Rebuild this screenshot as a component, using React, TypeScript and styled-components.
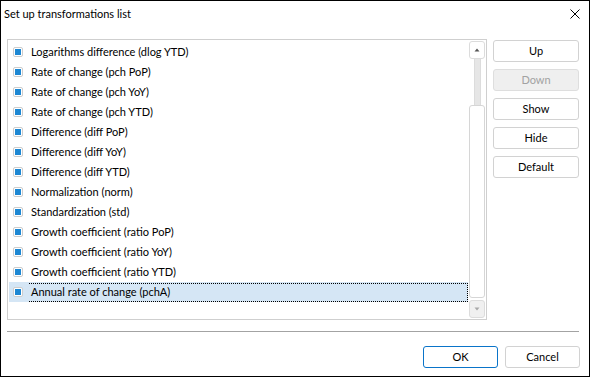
import React from "react";
import styled, { createGlobalStyle } from "styled-components";

const FONT = `Lato, "Noto Sans", sans-serif`;

const Global = createGlobalStyle`
  html, body { margin: 0; padding: 0; background: #fff; }
  * { box-sizing: border-box; }
  body { font-family: ${FONT}; font-size: 11px; color: #000; }
`;

const Window = styled.div`
  width: 590px;
  height: 377px;
  border: 1px solid #000;
  background: #fff;
  display: flex;
  flex-direction: column;
`;

const TitleBar = styled.div`
  height: 38px;
  display: flex;
  align-items: flex-start;
  justify-content: space-between;
  padding: 4px 9px 0 3px;
`;

const Title = styled.div`
  line-height: 18px;
  font-size: 11px;
`;

const CloseBtn = styled.div`
  width: 10px;
  height: 10px;
  margin-top: 4px;
  display: flex;
`;

const MainRow = styled.div`
  display: flex;
  gap: 6px;
  padding-left: 6px;
`;

const ListBox = styled.div`
  width: 480px;
  height: 281px;
  border: 1px solid #cfcfcf;
  display: flex;
  padding: 1px;
`;

const Rows = styled.div`
  flex: 1;
  padding: 1px 1px 0 0;
  display: flex;
  flex-direction: column;
`;

const Row = styled.div<{ $selected?: boolean }>`
  height: 20px;
  display: flex;
  align-items: center;
  padding-left: 4px;
  background: ${(p) => (p.$selected ? "#d5e6f5" : "transparent")};
`;

const Check = styled.span`
  width: 10px;
  height: 10px;
  border: 1px solid #cdcdcd;
  border-radius: 2px;
  padding: 1px;
  display: flex;
  flex-shrink: 0;
  background: #fff;
  &::after {
    content: "";
    flex: 1;
    background: #1c87d3;
  }
`;

const Label = styled.span<{ $focused?: boolean }>`
  flex: 1;
  height: 19px;
  line-height: 16px;
  margin-left: 6px;
  padding-left: 2px;
  white-space: nowrap;
  font-size: 11px;
  border-top: 1px dotted ${(p) => (p.$focused ? "#000" : "transparent")};
  border-bottom: 1px dotted ${(p) => (p.$focused ? "#000" : "transparent")};
  border-right: 1px dotted ${(p) => (p.$focused ? "#000" : "transparent")};
`;

const ScrollBar = styled.div`
  width: 16px;
  display: flex;
  flex-direction: column;
  align-items: center;
`;

const ArrowBtn = styled.div<{ $disabled?: boolean }>`
  width: 16px;
  height: 18px;
  border: 1px solid #dcdcdc;
  border-radius: 3px;
  background: ${(p) => (p.$disabled ? "#f0f0f0" : "#fff")};
  display: flex;
  align-items: center;
  justify-content: center;
  flex-shrink: 0;
`;

const Track = styled.div<{ $h: number }>`
  width: 7px;
  height: ${(p) => p.$h}px;
  background: #e6e6e6;
  border-left: 1px solid #dcdcdc;
  border-right: 1px solid #dcdcdc;
  flex-shrink: 0;
`;

const Thumb = styled.div`
  width: 16px;
  flex: 1;
  border: 1px solid #d6d6d6;
  border-radius: 3px;
  background: #fff;
  margin-bottom: 2px;
`;

const SideButtons = styled.div`
  display: flex;
  flex-direction: column;
  gap: 7px;
  padding-top: 1px;
`;

const Button = styled.button<{ $w?: number; $primary?: boolean }>`
  width: ${(p) => p.$w ?? 86}px;
  height: 22px;
  border: 1px solid ${(p) => (p.$primary ? "#0a74c9" : "#d2d2d2")};
  border-radius: 3px;
  background: #fff;
  font-family: ${FONT};
  font-size: 11px;
  color: #000;
  padding: 0;
  line-height: 18px;
  &:disabled {
    background: #efefef;
    border-color: #dedede;
    color: #a2a2a2;
  }
`;

const Separator = styled.div`
  margin: 11px 0 0 6px;
  width: 572px;
  height: 1px;
  background: #a3a3a3;
`;

const Footer = styled.div`
  display: flex;
  justify-content: flex-end;
  gap: 7px;
  padding: 14px 9px 0 0;
`;

const items = [
  "Logarithms difference (dlog YTD)",
  "Rate of change (pch PoP)",
  "Rate of change (pch YoY)",
  "Rate of change (pch YTD)",
  "Difference (diff PoP)",
  "Difference (diff YoY)",
  "Difference (diff YTD)",
  "Normalization (norm)",
  "Standardization (std)",
  "Growth coefficient (ratio PoP)",
  "Growth coefficient (ratio YoY)",
  "Growth coefficient (ratio YTD)",
  "Annual rate of change (pchA)",
];

export default function App() {
  return (
    <>
      <Global />
      <Window>
        <TitleBar>
          <Title>Set up transformations list</Title>
          <CloseBtn>
            <svg width="10" height="10" viewBox="0 0 10 10">
              <path d="M0.5 0.5 L9.5 9.5 M9.5 0.5 L0.5 9.5" stroke="#000" strokeWidth="1" />
            </svg>
          </CloseBtn>
        </TitleBar>
        <MainRow>
          <ListBox>
            <Rows>
              {items.map((t, i) => {
                const sel = i === items.length - 1;
                return (
                  <Row key={t} $selected={sel}>
                    <Check />
                    <Label $focused={sel}>{t}</Label>
                  </Row>
                );
              })}
            </Rows>
            <ScrollBar>
              <ArrowBtn>
                <svg width="6" height="4" viewBox="0 0 6 4">
                  <path d="M3 0.5 L5.5 3.5 L0.5 3.5 Z" fill="#555" />
                </svg>
              </ArrowBtn>
              <Track $h={46} />
              <Thumb />
              <ArrowBtn $disabled>
                <svg width="6" height="4" viewBox="0 0 6 4">
                  <path d="M0.5 0.5 L5.5 0.5 L3 3.5 Z" fill="#a8a8a8" />
                </svg>
              </ArrowBtn>
            </ScrollBar>
          </ListBox>
          <SideButtons>
            <Button>Up</Button>
            <Button disabled>Down</Button>
            <Button>Show</Button>
            <Button>Hide</Button>
            <Button>Default</Button>
          </SideButtons>
        </MainRow>
        <Separator />
        <Footer>
          <Button $w={75} $primary>OK</Button>
          <Button $w={75}>Cancel</Button>
        </Footer>
      </Window>
    </>
  );
}
